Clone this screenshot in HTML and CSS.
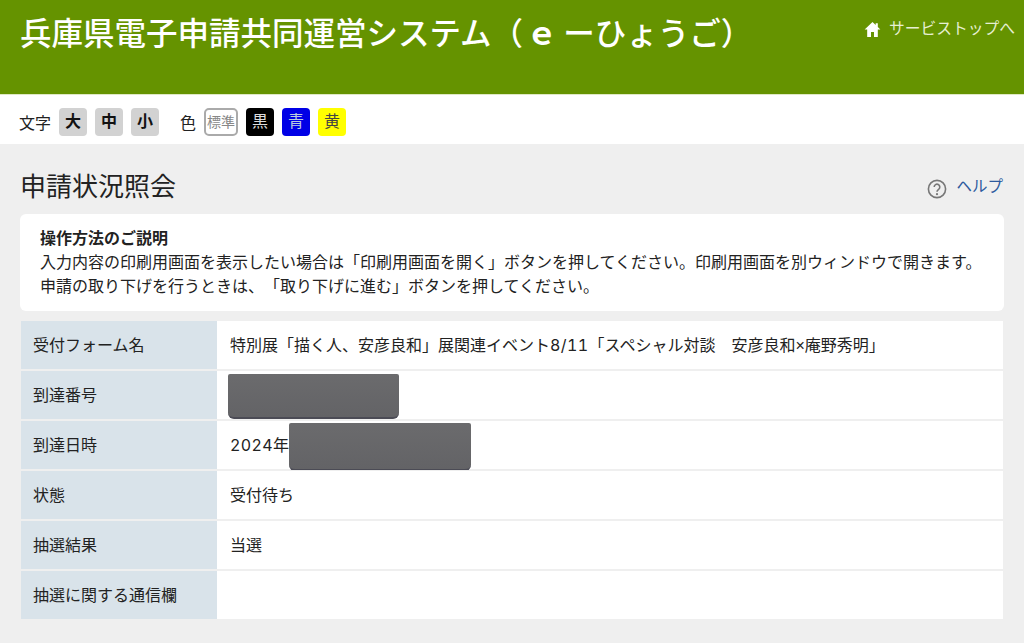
FILE: index.html
```html
<!DOCTYPE html>
<html lang="ja">
<head>
    <meta charset="UTF-8">
    <meta name="viewport" content="width=device-width, initial-scale=1.0">
    <title>申請状況照会</title>
    <link rel="stylesheet" href="styles.css">
</head>
<body>
    <header class="site-header">
        <h1>兵庫県電子申請共同運営システム（<span class="wide-e">ｅ</span> ーひょうご）</h1>
        <a class="top-link" href="#">
            <svg class="home-icon" viewBox="0 0 16 16"><path d="M8 1 0.6 8H3v7h3.6v-4.6h2.8V15H13V8h2.4L13 5.7V2h-2v1.8z"/></svg>
            サービストップへ
        </a>
    </header>

    <div class="toolbar">
        <span class="tool-label">文字</span>
        <button class="size-btn">大</button>
        <button class="size-btn">中</button>
        <button class="size-btn">小</button>
        <span class="tool-label color-label">色</span>
        <button class="color-btn standard">標準</button>
        <button class="color-btn black">黒</button>
        <button class="color-btn blue">青</button>
        <button class="color-btn yellow">黄</button>
    </div>

    <main class="content">
        <div class="title-row">
            <h2>申請状況照会</h2>
            <div class="help">
                <svg class="help-icon" viewBox="0 0 20 20">
                    <circle cx="10" cy="10" r="8.6"/>
                    <path d="M7.2 8a2.8 2.8 0 1 1 4.4 2.3c-1 .7-1.6 1.2-1.6 2.4"/>
                    <circle class="dot" cx="10" cy="15.2" r="1.1"/>
                </svg>
                <a href="#">ヘルプ</a>
            </div>
        </div>

        <section class="guide">
            <strong>操作方法のご説明</strong>
            <p>入力内容の印刷用画面を表示したい場合は「印刷用画面を開く」ボタンを押してください。印刷用画面を別ウィンドウで開きます。</p>
            <p>申請の取り下げを行うときは、「取り下げに進む」ボタンを押してください。</p>
        </section>

        <table class="status-table">
            <tr>
                <th>受付フォーム名</th>
                <td>特別展「描く人、安彦良和」展関連イベント<span class="num">8/11</span>「スペシャル対談　安彦良和×庵野秀明」</td>
            </tr>
            <tr>
                <th>到達番号</th>
                <td><div class="redact number"></div></td>
            </tr>
            <tr>
                <th>到達日時</th>
                <td><span class="num">2024</span>年<div class="redact date"></div></td>
            </tr>
            <tr>
                <th>状態</th>
                <td>受付待ち</td>
            </tr>
            <tr>
                <th>抽選結果</th>
                <td>当選</td>
            </tr>
            <tr>
                <th>抽選に関する通信欄</th>
                <td></td>
            </tr>
        </table>
    </main>
</body>
</html>
```

FILE: styles.css
```css
* {
    box-sizing: border-box;
}
html, body {
    height: 100%;
}
body {
    margin: 0;
    font-family: "Liberation Sans", "Noto Sans CJK JP", sans-serif;
    text-spacing-trim: space-all;
    background-color: #efefef;
    color: #222;
    overflow: hidden;
}
.site-header {
    height: 95px;
    padding: 14px 9px 0 20px;
    background-color: #659300;
    border-bottom: 1px solid #dfe9c4;
    display: flex;
    justify-content: space-between;
    align-items: flex-start;
    color: #fff;
}
.site-header h1 {
    margin: 0;
    font-size: 31.5px;
    line-height: 40px;
    font-weight: 500;
    white-space: nowrap;
}
.wide-e {
    font-weight: bold;
    margin-left: 3px;
    margin-right: -3px;
}
.top-link {
    margin-top: 3px;
    display: flex;
    align-items: center;
    gap: 8px;
    font-size: 15.75px;
    line-height: 24px;
    color: #e6efd2;
    text-decoration: none;
}
.home-icon {
    width: 17px;
    height: 17px;
    fill: #fff;
}
.toolbar {
    height: 49px;
    padding: 5px 20px 0 19px;
    background-color: #fff;
    display: flex;
    align-items: center;
    gap: 8px;
}
.tool-label {
    font-size: 16px;
}
.color-label {
    margin-left: 13px;
}
.toolbar button {
    width: 28px;
    height: 28px;
    padding: 0;
    border: none;
    border-radius: 4px;
    font-family: inherit;
    font-size: 16px;
    line-height: 28px;
}
.size-btn {
    background-color: #d2d2d2;
    color: #111;
    font-weight: bold;
}
.toolbar .standard {
    width: 34px;
    background-color: #fff;
    border: 2px solid #aaa;
    border-radius: 5px;
    color: #888;
    font-size: 14px;
    line-height: 24px;
}
.black {
    background-color: #000;
    color: #ddd;
}
.blue {
    background-color: #0000e6;
    color: #bcd;
}
.yellow {
    background-color: #ffff00;
    color: #444;
}
.content {
    padding: 0 20px;
}
.title-row {
    height: 70px;
    display: flex;
    justify-content: space-between;
    align-items: flex-start;
}
.title-row h2 {
    margin: 24px 0 0;
    font-size: 26px;
    line-height: 38px;
    font-weight: 400;
}
.help {
    margin: 31px 1px 0 0;
    display: flex;
    align-items: flex-start;
    gap: 9px;
    font-size: 15.5px;
    line-height: 24px;
}
.help a {
    color: #2d5a9e;
    text-decoration: none;
}
.help-icon {
    margin-top: 4px;
    width: 20px;
    height: 20px;
    fill: none;
    stroke: #777;
    stroke-width: 1.6;
}
.help-icon .dot {
    fill: #777;
    stroke: none;
}
.guide {
    height: 97px;
    padding: 13px 20px 0;
    background-color: #fff;
    border-radius: 6px;
    font-size: 16px;
    line-height: 24px;
}
.guide strong {
    display: block;
    font-weight: bold;
}
.guide p {
    margin: 0;
    white-space: nowrap;
}
.status-table {
    margin: 9px 0 0 1px;
    width: 982px;
    border-collapse: separate;
    border-spacing: 0;
    table-layout: fixed;
    font-size: 16px;
}
.status-table th,
.status-table td {
    height: 50px;
    padding: 0 13px 3px;
    border-top: 1px solid #efefef;
    border-bottom: 1px solid #efefef;
    white-space: nowrap;
    position: relative;
}
.status-table th {
    width: 196px;
    padding-left: 12px;
    background-color: #d9e3ea;
    font-weight: 400;
    text-align: left;
}
.status-table td {
    background-color: #fff;
}
.num {
    font-family: Inter, "Liberation Sans", sans-serif;
    font-feature-settings: "tnum";
    letter-spacing: 0.4px;
}
.redact {
    position: absolute;
    background: linear-gradient(#6b6b6d, #636366);
    border-radius: 2px 2px 6px 6px;
    border-bottom: 2px solid #4b4b55;
}
.number {
    left: 11px;
    top: 3px;
    width: 171px;
    height: 45px;
}
.date {
    left: 72px;
    top: 2px;
    width: 182px;
    height: 48px;
}
```
